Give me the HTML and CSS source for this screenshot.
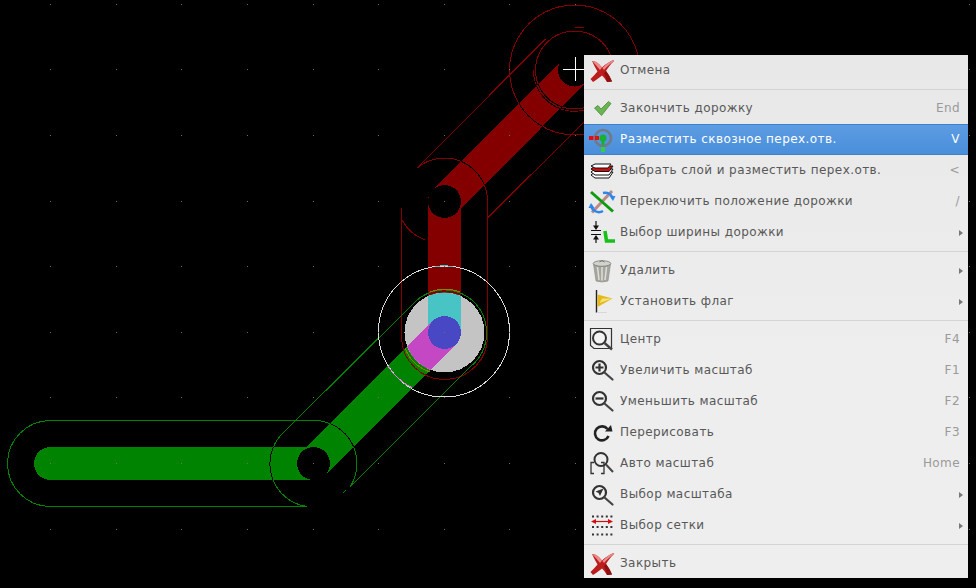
FILE: index.html
```html
<!DOCTYPE html>
<html lang="ru">
<head>
  <meta charset="UTF-8">
  <title>PCB editor - context menu</title>
  <link rel="stylesheet" href="styles.css">
</head>
<body>
  <svg class="board" width="976" height="588" viewBox="0 0 976 588">
    <defs>
      <path id="dot-row" d="M50 .5h1M116 .5h1M181 .5h1M247 .5h1M313 .5h1M378 .5h1M444 .5h1M509 .5h1M575 .5h1M969 .5h1"/>
      <mask id="red-track" maskUnits="userSpaceOnUse" x="0" y="0" width="976" height="588">
        <path d="M444.5 332.5V201.5L574.5 71" fill="none" stroke="#fff" stroke-width="33"/>
      </mask>
      <mask id="green-track" maskUnits="userSpaceOnUse" x="0" y="0" width="976" height="588">
        <path d="M444.5 332.5L313.5 463.5H50.5" fill="none" stroke="#fff" stroke-width="33"/>
      </mask>
      <clipPath id="via-clip"><circle cx="444.5" cy="332.5" r="40"/></clipPath>
      <path id="red-outline" d="M574.5 5a65 65 0 1 0 .1 0M574.5 31a39 39 0 1 0 .1 0M533.5 70a41 41 0 0 0 51 40M575 27a43 43 0 0 1 9 1M417 168a43 43 0 0 1 70.5 33.5V335M401.5 208V338M402 220a43 43 0 0 0 23 20M417 168L545.5 39M487.5 218L584 122M401.500 338a43 43 0 0 0 86 -3"/>
      <path id="green-outline" d="M50.5 420.5H315a43 43 0 0 1 35 66.5M50.5 420.5a43 43 0 0 0 0 86H307M283 433a43 43 0 0 0 24 73.500M283 433L415 302M350 487L470 367"/>
    </defs>

    <g shape-rendering="crispEdges">
      <path d="M444.500 332.500V201.500L574.500 71" fill="none" stroke="#840000" stroke-width="33" stroke-linejoin="round"/>
      <path d="M444.500 332.500L313.500 463.500H50.500" fill="none" stroke="#008400" stroke-width="33" stroke-linecap="round" stroke-linejoin="round"/>
      <circle cx="444.500" cy="201.500" r="16.500" fill="#000"/>
      <circle cx="574.500" cy="70" r="16.500" fill="#000"/>
      <circle cx="313.500" cy="463.500" r="16.500" fill="#000"/>
      <path d="M329 472l21 15-6 6-30 -10z" fill="#000"/>

      <g fill="none" stroke-width="1">
        <use href="#red-outline" stroke="#840000"/>
        <g mask="url(#red-track)"><use href="#red-outline" stroke="#000"/></g>
        <use href="#green-outline" stroke="#008400"/>
        <g mask="url(#green-track)"><use href="#green-outline" stroke="#000"/></g>
        <path d="M346 490l-3 3" stroke="#008400"/>
      </g>

      <circle cx="444.500" cy="332.500" r="40" fill="#c4c4c4"/>
      <g clip-path="url(#via-clip)">
        <rect x="428" y="290" width="33" height="43" fill="#48c4c4"/>
        <path d="M444.500 332.500L313.500 463.500" fill="none" stroke="#c448c4" stroke-width="33"/>
      </g>
      <circle cx="444.500" cy="332.500" r="16.500" fill="#4848c4"/>

      <g fill="none" stroke-width="1">
        <path d="M415 302A42 42 0 0 1 486.500 332.500A42 42 0 0 1 470 367" stroke="#008400"/>
        <path d="M430 292A41 41 0 0 1 460 292M405 348A41 41 0 0 0 430 372" stroke="#848400"/>
        <circle cx="444" cy="331.500" r="65.500" stroke="#dcdcdc"/>
        <path d="M435 266.500A65.500 65.500 0 0 1 453 266.500" stroke="#48c4c4"/>
        <path d="M388 366A65.500 65.500 0 0 0 412 388" stroke="#e080e0"/>
      </g>

      <g fill="none" stroke="#6e6e6e" stroke-width="1">
        <use href="#dot-row" y="4"/>
        <use href="#dot-row" y="69"/>
        <use href="#dot-row" y="135"/>
        <use href="#dot-row" y="201"/>
        <use href="#dot-row" y="266"/>
        <use href="#dot-row" y="332"/>
        <use href="#dot-row" y="397"/>
        <use href="#dot-row" y="463"/>
        <use href="#dot-row" y="529"/>
      </g>

      <path d="M563 69.500H584M575.500 57V81" fill="none" stroke="#fff" stroke-width="1"/>
    </g>
  </svg>

  <svg class="icon-defs" width="0" height="0">
    <defs>
      <symbol id="i-cross" viewBox="0 0 24 24">
        <path d="M2 2L5 2.500C8 4 10.500 6.500 12 8.500C15 5.500 19 3 23.500 1L24 2C20.500 5.500 17.500 9 16 12C18.500 15.500 20.500 18.500 22 22.500L17 23C15.500 20.500 14 18.500 12 16.500C9.500 18.500 7 20.500 3 23L.5 20C3 17.500 5.500 15 7.500 12.500C5.500 9 3.500 5.500 2 2Z" fill="#bb1c1c"/>
        <path d="M2 2L5 2.500C8 4 10.500 6.500 12 8.500L10 11C7.500 8 5 5 2 2ZM23.500 1L24 2C20 5 16.500 8 14 11L12.500 9C15.500 5.500 19 3 23.500 1Z" fill="#ec8a8a"/>
        <path d="M17 23L22 22.500C20.500 18.500 18.500 15.500 16 12L14 14C15.500 17 16.500 20 17 23Z" fill="#8e1010"/>
      </symbol>
      <symbol id="i-glass" viewBox="0 0 24 24">
        <circle cx="9.500" cy="8.500" r="6.500" fill="#f2f2f2" stroke="#333" stroke-width="2.200"/>
        <path d="M14.500 13.500L22.500 20.500" fill="none" stroke="#444" stroke-width="2.200" stroke-linecap="round"/>
      </symbol>
    </defs>
  </svg>

  <div class="menu">
    <div class="menu-item">
      <svg class="icon"><use href="#i-cross"/></svg>
      <span class="label">Отмена</span>
    </div>
    <div class="menu-sep"></div>
    <div class="menu-item">
      <svg class="icon" viewBox="0 0 24 24">
        <path d="M4.500 11L8 8.500L11 12L18.500 4.500L21 6.500L11.500 18.500Z" fill="#6ab552" stroke="#4a8a38" stroke-width=".8"/>
      </svg>
      <span class="label">Закончить дорожку</span>
      <span class="accel">End</span>
    </div>
    <div class="menu-item active">
      <svg class="icon" viewBox="0 0 24 24">
        <circle cx="13" cy="10" r="8" fill="none" stroke="#6f7a86" stroke-width="2.600"/>
        <path d="M-1 8H3.500V12H-1ZM5 8H9V12H5Z" fill="#e01010"/>
        <path d="M11.500 10H14.500V17H11.500Z" fill="#18b030"/>
        <circle cx="13" cy="10" r="3.500" fill="#18b030"/>
        <path d="M11 19H15V24H11Z" fill="#30d040"/>
      </svg>
      <span class="label">Разместить сквозное перех.отв.</span>
      <span class="accel">V</span>
    </div>
    <div class="menu-item">
      <svg class="icon" viewBox="0 0 24 24">
        <path d="M1 16L5 13H23L19 19H5Z" fill="#fff" stroke="#111" stroke-width="1"/>
        <path d="M1 13L5 10H23L19 16H5Z" fill="#fff" stroke="#111" stroke-width="1"/>
        <path d="M1 10L5 7H23L19 12.500H5Z" fill="#c81010" stroke="#111" stroke-width="1"/>
        <path d="M1 7L5 5H21L18 9H5Z" fill="#fff" stroke="#111" stroke-width="1"/>
      </svg>
      <span class="label">Выбрать слой и разместить перех.отв.</span>
      <span class="accel">&lt;</span>
    </div>
    <div class="menu-item">
      <svg class="icon" viewBox="0 0 24 24">
        <path d="M22 1L2 22.500" fill="none" stroke="#b98a86" stroke-width="3"/>
        <path d="M1 15A8 8 0 0 0 13 21M23 9A8 8 0 0 0 13 3" fill="none" stroke="#2f86ea" stroke-width="2.400"/>
        <path d="M1 13l3.500 5-6 0zM23 11l-3.500-5 6 0z" fill="#2f86ea"/>
        <path d="M1 2L23 21.500" fill="none" stroke="#109a10" stroke-width="3"/>
      </svg>
      <span class="label">Переключить положение дорожки</span>
      <span class="accel">/</span>
    </div>
    <div class="menu-item">
      <svg class="icon" viewBox="0 0 24 24">
        <path d="M1 9.500H11M1 13.500H11" fill="none" stroke="#111" stroke-width="1"/>
        <path d="M6 0V5M6 18V22" fill="none" stroke="#111" stroke-width="1.200"/>
        <path d="M3 4.500H9L6 9ZM3 18.500H9L6 14Z" fill="#111"/>
        <path d="M15 10L16.500 20H25" fill="none" stroke="#18c018" stroke-width="3.600"/>
      </svg>
      <span class="label">Выбор ширины дорожки</span>
      <span class="arrow"></span>
    </div>
    <div class="menu-sep"></div>
    <div class="menu-item">
      <svg class="icon" viewBox="0 0 24 24">
        <path d="M3.500 5L6 22Q12 24 18 22L20.500 5Z" fill="#a6a69e" stroke="#8a8a84" stroke-width=".6"/>
        <path d="M7.500 8L9 21M12 8V21.500M16.500 8L15 21" fill="none" stroke="#dededa" stroke-width="1.500"/>
        <ellipse cx="12" cy="4.500" rx="8.800" ry="2.800" fill="#d2d2cc" stroke="#777" stroke-width=".8"/>
        <path d="M9.500 3Q12 .2 14.500 3" fill="none" stroke="#777" stroke-width="1"/>
      </svg>
      <span class="label">Удалить</span>
      <span class="arrow"></span>
    </div>
    <div class="menu-item">
      <svg class="icon" viewBox="0 0 24 24">
        <path d="M6.500 0V22.500" fill="none" stroke="#222" stroke-width="1.400"/>
        <path d="M7 22.500H17" fill="none" stroke="#d8d8d8" stroke-width="1"/>
        <path d="M7.500 4.500L22.500 8.500L7.500 17Z" fill="#e4b818"/>
        <path d="M12 8.500L22.500 8.500L9.500 13Z" fill="#f6e27a"/>
      </svg>
      <span class="label">Установить флаг</span>
      <span class="arrow"></span>
    </div>
    <div class="menu-sep"></div>
    <div class="menu-item">
      <svg class="icon" viewBox="0 0 24 24">
        <path d="M.5 .5H21.500V20.500H4L.5 17.500Z" fill="#eee" stroke="#333" stroke-width="1.200"/>
        <circle cx="9.500" cy="10" r="6.500" fill="#f4f4f4" stroke="#333" stroke-width="2"/>
        <path d="M14.500 15L22 21.500" fill="none" stroke="#444" stroke-width="2.400"/>
      </svg>
      <span class="label">Центр</span>
      <span class="accel">F4</span>
    </div>
    <div class="menu-item">
      <svg class="icon" viewBox="0 0 24 24">
        <use href="#i-glass" width="24" height="24"/>
        <path d="M9.500 4.500V12.500M5.500 8.500H13.500" fill="none" stroke="#333" stroke-width="2.200"/>
      </svg>
      <span class="label">Увеличить масштаб</span>
      <span class="accel">F1</span>
    </div>
    <div class="menu-item">
      <svg class="icon" viewBox="0 0 24 24">
        <use href="#i-glass" width="24" height="24"/>
        <path d="M5.500 8.500H13.500" fill="none" stroke="#333" stroke-width="2.200"/>
      </svg>
      <span class="label">Уменьшить масштаб</span>
      <span class="accel">F2</span>
    </div>
    <div class="menu-item">
      <svg class="icon" viewBox="0 0 24 24">
        <path d="M17.500 8A7 7 0 1 0 18.500 15" fill="none" stroke="#222" stroke-width="2.600"/>
        <path d="M15 10.500L22.500 10.500L21 4Z" fill="#222"/>
      </svg>
      <span class="label">Перерисовать</span>
      <span class="accel">F3</span>
    </div>
    <div class="menu-item">
      <svg class="icon" viewBox="0 0 24 24">
        <circle cx="11" cy="7.500" r="6.500" fill="none" stroke="#333" stroke-width="2"/>
        <path d="M16 12.500L23 20" fill="none" stroke="#444" stroke-width="2"/>
        <path d="M4 10.500H1V21.500H4M11 10.500H14V21.500H11" fill="none" stroke="#333" stroke-width="1.300"/>
      </svg>
      <span class="label">Авто масштаб</span>
      <span class="accel">Home</span>
    </div>
    <div class="menu-item">
      <svg class="icon" viewBox="0 0 24 24">
        <use href="#i-glass" width="24" height="24" y="1"/>
        <path d="M13.500 5.500L5.500 8.500L8.500 10L10 13Z" fill="#333"/>
      </svg>
      <span class="label">Выбор масштаба</span>
      <span class="arrow"></span>
    </div>
    <div class="menu-item">
      <svg class="icon" viewBox="0 0 24 24">
        <path d="M2 2.500H23M2 13H23M2 20.500H23" fill="none" stroke="#333" stroke-width="2" stroke-dasharray="2 2.600"/>
        <path d="M5 7.500H19" fill="none" stroke="#d01010" stroke-width="1.200"/>
        <path d="M1 7.500L6 5V10ZM23 7.500L18 5V10Z" fill="#d01010"/>
      </svg>
      <span class="label">Выбор сетки</span>
      <span class="arrow"></span>
    </div>
    <div class="menu-sep"></div>
    <div class="menu-item">
      <svg class="icon"><use href="#i-cross"/></svg>
      <span class="label">Закрыть</span>
    </div>
  </div>
</body>
</html>
```

FILE: styles.css
```css
body {
  margin: 0;
  width: 976px;
  height: 588px;
  overflow: hidden;
  background: #000;
  font-family: "DejaVu Sans", sans-serif;
  font-size: 12px;
}
.board {
  position: absolute;
  left: 0;
  top: 0;
}
.icon-defs {
  position: absolute;
}
.menu {
  position: absolute;
  left: 584px;
  top: 55px;
  width: 384px;
  height: 523px;
  overflow: hidden;
  background: linear-gradient(#e8e8e8, #eeeeee 60%);
  color: #585858;
}
.menu-item {
  height: 31px;
  display: flex;
  align-items: center;
  padding: 0 8px 0 6px;
  box-sizing: border-box;
}
.menu-item.active {
  background: linear-gradient(#5c9ce2, #4a8fdb);
  border-top: 1px solid #3f80c8;
  border-bottom: 1px solid #3f80c8;
  color: #fff;
}
.menu-item.active .accel {
  color: #fff;
}
.icon {
  width: 24px;
  height: 24px;
  flex: none;
  overflow: visible;
}
.label {
  margin: 0 0 2px 6px;
  flex: 1;
  white-space: nowrap;
  letter-spacing: 0.42px;
}
.accel {
  margin-bottom: 2px;
  color: #9a9a9a;
  letter-spacing: 0.42px;
}
.arrow {
  width: 0;
  height: 0;
  margin-right: -3px;
  border-left: 4px solid #777;
  border-top: 3px solid transparent;
  border-bottom: 3px solid transparent;
}
.menu-sep {
  height: 7px;
  box-sizing: border-box;
  padding-top: 3px;
}
.menu-sep::before {
  content: "";
  display: block;
  height: 1px;
  background: #d4d4d4;
}
```
